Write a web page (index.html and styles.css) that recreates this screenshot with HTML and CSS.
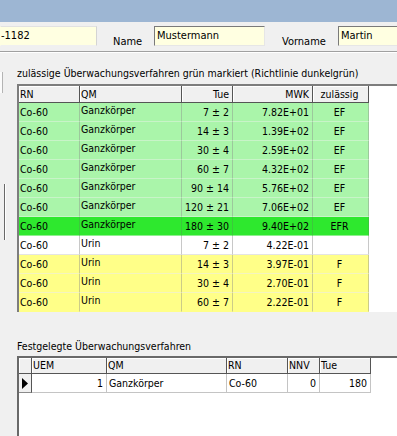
FILE: index.html
```html
<!DOCTYPE html>
<html lang="de">
<head>
<meta charset="utf-8">
<title>Überwachungsverfahren</title>
<link rel="stylesheet" href="styles.css">
</head>
<body>
<div class="titlebar"></div>
<div class="fields">
  <div class="field f-id">-1182</div>
  <span class="lbl l-name">Name</span>
  <div class="field f-name">Mustermann</div>
  <span class="lbl l-vorname">Vorname</span>
  <div class="field f-vorname">Martin</div>
</div>
<div class="sep"></div>
<div class="panel">
  <div class="sidebar">
    <div class="side-box"></div>
    <div class="side-line"></div>
  </div>
  <div class="main">
    <div class="caption c1">zulässige Überwachungsverfahren grün markiert (Richtlinie dunkelgrün)</div>
    <div class="grid g1">
      <div class="row head">
        <div class="cell">RN</div><div class="cell">QM</div><div class="cell r">Tue</div><div class="cell r">MWK</div><div class="cell c">zulässig</div>
      </div>
      <div class="row ok">
        <div class="cell">Co-60</div><div class="cell qm">Ganzkörper</div><div class="cell r">7 ± 2</div><div class="cell r">7.82E+01</div><div class="cell c">EF</div>
      </div>
      <div class="row ok">
        <div class="cell">Co-60</div><div class="cell qm">Ganzkörper</div><div class="cell r">14 ± 3</div><div class="cell r">1.39E+02</div><div class="cell c">EF</div>
      </div>
      <div class="row ok">
        <div class="cell">Co-60</div><div class="cell qm">Ganzkörper</div><div class="cell r">30 ± 4</div><div class="cell r">2.59E+02</div><div class="cell c">EF</div>
      </div>
      <div class="row ok">
        <div class="cell">Co-60</div><div class="cell qm">Ganzkörper</div><div class="cell r">60 ± 7</div><div class="cell r">4.32E+02</div><div class="cell c">EF</div>
      </div>
      <div class="row ok">
        <div class="cell">Co-60</div><div class="cell qm">Ganzkörper</div><div class="cell r">90 ± 14</div><div class="cell r">5.76E+02</div><div class="cell c">EF</div>
      </div>
      <div class="row ok">
        <div class="cell">Co-60</div><div class="cell qm">Ganzkörper</div><div class="cell r">120 ± 21</div><div class="cell r">7.06E+02</div><div class="cell c">EF</div>
      </div>
      <div class="row best">
        <div class="cell">Co-60</div><div class="cell qm">Ganzkörper</div><div class="cell r">180 ± 30</div><div class="cell r">9.40E+02</div><div class="cell c">EFR</div>
      </div>
      <div class="row plain">
        <div class="cell">Co-60</div><div class="cell qm">Urin</div><div class="cell r">7 ± 2</div><div class="cell r">4.22E-01</div><div class="cell c"></div>
      </div>
      <div class="row warn">
        <div class="cell">Co-60</div><div class="cell qm">Urin</div><div class="cell r">14 ± 3</div><div class="cell r">3.97E-01</div><div class="cell c">F</div>
      </div>
      <div class="row warn">
        <div class="cell">Co-60</div><div class="cell qm">Urin</div><div class="cell r">30 ± 4</div><div class="cell r">2.70E-01</div><div class="cell c">F</div>
      </div>
      <div class="row warn">
        <div class="cell">Co-60</div><div class="cell qm">Urin</div><div class="cell r">60 ± 7</div><div class="cell r">2.22E-01</div><div class="cell c">F</div>
      </div>
    </div>
    <div class="caption c2">Festgelegte Überwachungsverfahren</div>
    <div class="grid g2">
      <div class="row head">
        <div class="cell ind"></div><div class="cell">UEM</div><div class="cell">QM</div><div class="cell">RN</div><div class="cell">NNV</div><div class="cell">Tue</div>
      </div>
      <div class="row data">
        <div class="cell ind"><svg width="6" height="11" viewBox="0 0 6 11"><path d="M0 0 L6 5.5 L0 11 Z" fill="#000"/></svg></div><div class="cell r">1</div><div class="cell">Ganzkörper</div><div class="cell">Co-60</div><div class="cell r">0</div><div class="cell r">180</div>
      </div>
    </div>
  </div>
</div>
</body>
</html>
```

FILE: styles.css
```css
* { box-sizing: border-box; }
html, body { margin: 0; padding: 0; }
body {
  width: 397px;
  height: 436px;
  overflow: hidden;
  background: #f0f0f0;
  font-family: "DejaVu Sans Condensed", "Liberation Sans", sans-serif;
  font-size: 10.5px;
  color: #000;
}
.titlebar { height: 22px; background: #9db6d3; }

.fields { height: 29px; display: flex; align-items: flex-start; white-space: nowrap; }
.field {
  margin-top: 4px;
  height: 20px;
  background: #ffffe1;
  border: 1px solid;
  border-color: #7a7a7a #e6e6e6 #e6e6e6 #7a7a7a;
  font-size: 11px;
  line-height: 17px;
  padding-left: 2px;
  overflow: hidden;
}
.f-id { width: 97px; padding-left: 0; border-color: #e2e2e2 #d4d4d4 #f0f0f0 #ffffe1; }
.f-name { width: 111px; }
.f-vorname { flex: 1; border-right: 0; }
.lbl { display: block; margin-top: 13px; font-size: 11px; line-height: 13px; }
.l-name { margin-left: 16px; width: 41px; }
.l-vorname { margin-left: 17px; width: 56px; }

.sep { height: 2px; border-top: 1px solid #a0a0a0; border-bottom: 1px solid #fff; }

.panel { display: flex; height: 383px; }
.sidebar { width: 17px; flex: none; }
.side-box { margin-top: 19px; width: 3px; height: 21px; background: #fbfbfb; border-right: 1px solid #b4b4b4; }
.side-line { margin-top: 91px; margin-left: 4px; width: 2px; height: 56px; border-left: 1px solid #696969; border-right: 1px solid #fff; }

.main { flex: 1; display: flex; flex-direction: column; min-width: 0; }
.caption { line-height: 13px; white-space: nowrap; }
.c1 { margin-top: 14px; }
.c2 { margin-top: 28px; }

.grid {
  background: #fff;
  border-top: 2px solid #696969;
  border-left: 2px solid #696969;
}
.g1 { margin-top: 4px; height: 228px; flex: none; border-top-color: #7d7d7d; border-left-color: #7d7d7d; }
.g2 { margin-top: 3px; flex: 1; }

.row { display: grid; }
.g1 .row { grid-template-columns: 61px 102px 51px 80px 56px; width: 350px; height: 19px; }
.g1 .row.head { height: 17px; }
.g2 .row { grid-template-columns: 13px 75px 120px 61px 32px 51px; width: 352px; height: 19px; }
.g2 .row.head { height: 16px; }

.cell {
  white-space: nowrap;
  overflow: hidden;
  padding: 0 3px 0 1px;
  line-height: 18px;
  border-right: 1px solid #b9b9b9;
  border-bottom: 1px solid #cfcfcf;
}
.r { text-align: right; }
.c { text-align: center; }
.qm { line-height: 15px; }

.head .cell {
  background: #f0f0f0;
  border-right: 1px solid #555;
  border-bottom: 1px solid #555;
  box-shadow: inset 1px 1px 0 #fff;
  line-height: 16px;
}
.g2 .head .cell { line-height: 15px; }

.ok .cell { background: #aaf5aa; border-bottom-color: #c8f4c8; border-right-color: #9cc89c; }
.best .cell { background: #2ee82e; border-bottom-color: #8eef8e; border-right-color: #3cc83c; }
.plain .cell { background: #fff; border-bottom-color: #e4e4e4; border-right-color: #c8c8c8; }
.warn .cell { background: #ffff88; border-bottom-color: #f4f4c0; border-right-color: #cccc88; }
.g1 .warn:last-child .cell { border-bottom-color: #ffff88; }

.data .cell { background: #fff; border-right-color: #c4c4c4; border-bottom-color: #c4c4c4; padding-left: 2px; }
.data .cell.ind { background: #f0f0f0; border-right-color: #555; border-bottom-color: #8a8a8a; padding: 4px 0 0 3px; line-height: 0; }
.data .cell.r { padding-right: 3px; }
```
